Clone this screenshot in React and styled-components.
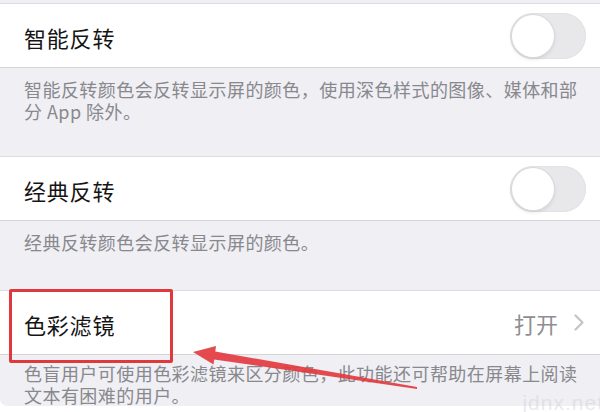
import styled, { createGlobalStyle } from "styled-components";

const GlobalStyle = createGlobalStyle`
	html, body {
		margin: 0;
		padding: 0;
		background: #ffffff;
	}
	body {
		font-family: "Noto Sans CJK SC", "Noto Sans", sans-serif;
	}
`;

const Page = styled.div`
	position: relative;
	width: 600px;
	height: 412px;
	overflow: hidden;
	background: #ffffff;
`;

const Settings = styled.div`
	display: flex;
	flex-direction: column;
	background: #efeff4;
	border-bottom-left-radius: 7px;
	padding-top: 3px;
`;

const Row = styled.div`
	display: flex;
	align-items: center;
	justify-content: space-between;
	height: 63px;
	padding: 0 14px 0 24px;
	background: #ffffff;
	border-top: 1px solid #dcdce0;
	border-bottom: 1px solid #d4d4d8;
`;

const Title = styled.div`
	font-size: 22px;
	letter-spacing: 0.8px;
	color: #151515;
	padding-top: 3px;
`;

const Switch = styled.div`
	position: relative;
	width: 76px;
	height: 46px;
	border-radius: 23px;
	background: #e8e8ea;
	box-shadow: inset 0 0 0 1px #e2e2e4;
	&::after {
		content: "";
		position: absolute;
		left: 2px;
		top: 2px;
		width: 42px;
		height: 42px;
		border-radius: 50%;
		background: #ffffff;
		box-shadow: 0 0 0 1px #dadadc, 0 2px 4px rgba(0, 0, 0, 0.12);
	}
`;

const Detail = styled.div`
	display: flex;
	align-items: center;
	gap: 16px;
	padding-right: 2px;
	font-size: 22px;
	color: #8e8e93;
`;

const Footnote = styled.div`
	padding: ${(p) => p.$top}px 12px ${(p) => p.$bottom}px 24px;
	font-size: 18px;
	line-height: 22px;
	letter-spacing: 0.45px;
	color: #88888d;
`;

const HighlightBox = styled.div`
	position: absolute;
	left: 9px;
	top: 289px;
	width: 158px;
	height: 68px;
	border: 3px solid #e0393d;
	border-radius: 2px;
`;

const Overlay = styled.svg`
	position: absolute;
	left: 0;
	top: 0;
	pointer-events: none;
`;

const Watermark = styled.div`
	position: absolute;
	right: -4px;
	bottom: -3px;
	font-family: "Liberation Sans", Arial, sans-serif;
	font-size: 21px;
	letter-spacing: 1px;
	color: rgba(205, 205, 214, 0.45);
`;

const Chevron = () => (
	<svg width="10" height="17" viewBox="0 0 10 17">
		<polyline
			points="1.5,1.5 8.5,8.5 1.5,15.5"
			fill="none"
			stroke="#c4c4c8"
			strokeWidth="2.2"
			strokeLinecap="round"
			strokeLinejoin="round"
		/>
	</svg>
);

const App = () => {
	return (
		<Page>
			<GlobalStyle />
			<Settings>
				<Row>
					<Title>智能反转</Title>
					<Switch />
				</Row>
				<Footnote $top={10} $bottom={34}>
					智能反转颜色会反转显示屏的颜色，使用深色样式的图像、媒体和部
					<br />分 App 除外。
				</Footnote>
				<Row>
					<Title>经典反转</Title>
					<Switch />
				</Row>
				<Footnote $top={10} $bottom={37}>
					经典反转颜色会反转显示屏的颜色。
				</Footnote>
				<Row>
					<Title>色彩滤镜</Title>
					<Detail>
						打开
						<Chevron />
					</Detail>
				</Row>
				<Footnote $top={7} $bottom={0}>
					色盲用户可使用色彩滤镜来区分颜色，此功能还可帮助在屏幕上阅读
					<br />文本有困难的用户。
				</Footnote>
			</Settings>
			<HighlightBox />
			<Overlay width="600" height="412" viewBox="0 0 600 412">
				<polygon
					points="193,352 216,346 215.3,351.5 417,387 417,389 214.2,359.5 213.5,364.5"
					fill="#e23b3f"
					opacity="0.92"
				/>
			</Overlay>
			<Watermark>jdnx.net</Watermark>
		</Page>
	);
};

export default App;
